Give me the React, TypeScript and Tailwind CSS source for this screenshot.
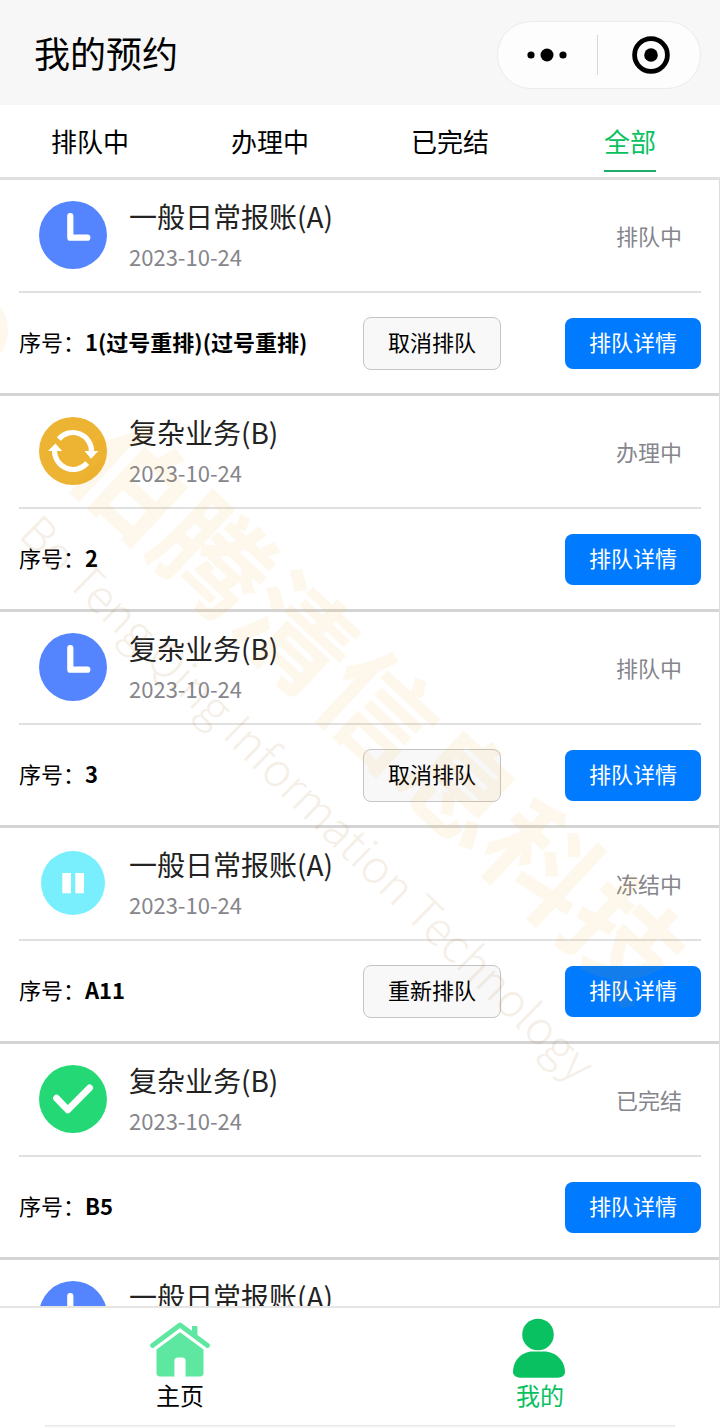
import { useState } from 'react';
import clsx from 'clsx';

type Status = 'waiting' | 'processing' | 'frozen' | 'done';

interface Booking {
  id: number;
  title: string;
  date: string;
  status: Status;
  number: string;
  action?: string;
}

const STATUS_LABELS: Record<Status, string> = {
  waiting: '排队中',
  processing: '办理中',
  frozen: '冻结中',
  done: '已完结',
};

const TABS: { label: string; status?: Status }[] = [
  { label: '排队中', status: 'waiting' },
  { label: '办理中', status: 'processing' },
  { label: '已完结', status: 'done' },
  { label: '全部' },
];

const BOOKINGS: Booking[] = [
  { id: 1, title: '一般日常报账(A)', date: '2023-10-24', status: 'waiting', number: '1(过号重排)(过号重排)', action: '取消排队' },
  { id: 2, title: '复杂业务(B)', date: '2023-10-24', status: 'processing', number: '2' },
  { id: 3, title: '复杂业务(B)', date: '2023-10-24', status: 'waiting', number: '3', action: '取消排队' },
  { id: 4, title: '一般日常报账(A)', date: '2023-10-24', status: 'frozen', number: 'A11', action: '重新排队' },
  { id: 5, title: '复杂业务(B)', date: '2023-10-24', status: 'done', number: 'B5' },
  { id: 6, title: '一般日常报账(A)', date: '2023-10-24', status: 'waiting', number: 'A6', action: '取消排队' },
];

const StatusIcon = ({ status }: { status: Status }) => (
  <svg viewBox="0 0 68 68" className="size-[68px] shrink-0" fill="none" aria-hidden="true">
    {status === 'waiting' && (
      <>
        <circle cx="34" cy="34" r="34" fill="#5485fe" />
        <path d="M31.3 15v21.7h17" stroke="#fff" strokeWidth="6.2" strokeLinecap="round" strokeLinejoin="round" />
      </>
    )}
    {status === 'processing' && (
      <>
        <circle cx="34" cy="34" r="34" fill="#edb332" />
        <path d="M19.8 22A18.6 18.6 0 0 1 52.5 35M15.5 33A18.6 18.6 0 0 0 48.2 46" stroke="#fff" strokeWidth="5.2" />
        <path d="M45.5 34h14L52 41.8zM9 34h14.2L16.4 26.4z" fill="#fff" />
      </>
    )}
    {status === 'frozen' && (
      <>
        <circle cx="34" cy="34" r="32" fill="#79effe" />
        <path d="M23.3 24H32v20.3h-8.7zM36.3 24H45v20.3h-8.7z" fill="#fff" />
      </>
    )}
    {status === 'done' && (
      <>
        <circle cx="34" cy="34" r="34" fill="#24d975" />
        <path d="M17.5 33.2l11.3 11.6 21.8-22" stroke="#fff" strokeWidth="6.8" strokeLinecap="round" strokeLinejoin="round" />
      </>
    )}
  </svg>
);

const HomeIcon = () => (
  <svg viewBox="0 0 62 56" className="h-14 w-[62px]" fill="none" aria-hidden="true">
    <path d="M3.5 24.5L31 4l27.5 20.5" stroke="#5ee7a0" strokeWidth="4.8" strokeLinecap="round" strokeLinejoin="round" />
    <path d="M43 5h5.4v13L43 14z" fill="#5ee7a0" />
    <path
      d="M31 11.2L54.5 28.6V52a3.4 3.4 0 0 1-3.4 3.4H36.6V40a3.4 3.4 0 0 0-3.4-3.4h-4.4a3.4 3.4 0 0 0-3.4 3.4v15.4H10.9A3.4 3.4 0 0 1 7.5 52V28.6z"
      fill="#5ee7a0"
    />
  </svg>
);

const UserIcon = () => (
  <svg viewBox="0 0 56 62" className="h-[62px] w-14" fill="#0ac161" aria-hidden="true">
    <circle cx="26" cy="17.5" r="15.8" />
    <path d="M21 34.5h11c12 0 21 9.5 21 20.5 0 4-4 5.8-9 5.8H10c-5 0-9-1.8-9-5.8C1 44 9 34.5 21 34.5z" />
  </svg>
);

const Watermark = () => (
  <svg className="pointer-events-none absolute inset-0 size-full" aria-hidden="true">
    <circle cx="-32" cy="150" r="40" fill="#f5a623" opacity="0.09" />
    <g textAnchor="middle" dominantBaseline="central">
      <text transform="translate(383 525) rotate(43)" fontSize="112" fontWeight="700" fill="#f5a623" opacity="0.08">
        伯腾清信息科技
      </text>
      <text transform="translate(310 616) rotate(44.5)" fontSize="46" fontWeight="300" fill="#b08040" opacity="0.12">
        Bo Teng Qing Information Technology
      </text>
    </g>
  </svg>
);

const BookingCard = ({ booking }: { booking: Booking }) => (
  <li className="border-b-[3px] border-[#d4d4d4] pr-[18px] pl-[19px]">
    <div className="flex h-[113px] items-center border-b-2 border-[#e0e0e0] pr-[19px] pb-px pl-5">
      <StatusIcon status={booking.status} />
      <div className="ml-[22px] flex-1 pt-0.5">
        <h2 className="text-[28px] leading-10 text-[#222]">{booking.title}</h2>
        <p className="text-[22px] leading-10 text-[#85858c]">{booking.date}</p>
      </div>
      <span className="text-[22px] text-[#85858c]">{STATUS_LABELS[booking.status]}</span>
    </div>
    <div className="flex h-[100px] items-center text-[22px]">
      <p className="flex-1 pb-[3px]">
        序号：<b className="font-bold">{booking.number}</b>
      </p>
      {booking.action && (
        <button className="mr-16 h-[53px] w-[138px] rounded-lg border border-[#c4c4c4] bg-[#f8f8f8] pb-[3px]">
          {booking.action}
        </button>
      )}
      <button className="h-[51px] w-[136px] rounded-lg bg-[#007aff] pb-[3px] text-white">排队详情</button>
    </div>
  </li>
);

export default function App() {
  const [tab, setTab] = useState(3);
  const filter = TABS[tab].status;
  const bookings = BOOKINGS.filter((b) => !filter || b.status === filter);

  return (
    <div className="flex h-screen flex-col bg-white font-['Noto_Sans_CJK_SC',sans-serif] text-black">
      {/* Header */}
      <header className="flex h-[105px] shrink-0 items-center justify-between bg-[#f7f7f7] pt-1 pr-[19px] pl-[34px]">
        <h1 className="pb-1.5 text-[36px] leading-none">我的预约</h1>
        <div className="flex h-[68px] w-[204px] items-center rounded-full border border-[#ebebeb] bg-[#fdfdfd]">
          <button aria-label="更多" className="flex h-full flex-1 items-center justify-center">
            <svg viewBox="0 0 40 14" className="h-3.5 w-10" aria-hidden="true">
              <circle cx="4" cy="7" r="3.6" />
              <circle cx="20" cy="7" r="6.5" />
              <circle cx="36" cy="7" r="3.6" />
            </svg>
          </button>
          <span className="h-10 w-px bg-[#d8d8d8]" />
          <button aria-label="关闭" className="flex h-full flex-1 items-center justify-center pl-1">
            <svg viewBox="0 0 38 38" className="size-[38px]" aria-hidden="true">
              <circle cx="19" cy="19" r="16.4" fill="none" stroke="#000" strokeWidth="4.8" />
              <circle cx="19" cy="19" r="6.8" />
            </svg>
          </button>
        </div>
      </header>

      {/* Tabs */}
      <nav className="grid shrink-0 grid-cols-4 border-b-[3px] border-[#e0e0e0] pt-2 pb-[5px]">
        {TABS.map((t, i) => (
          <button key={t.label} onClick={() => setTab(i)} className="flex justify-center">
            <span
              className={clsx(
                'border-b-2 pb-px text-[26px] leading-[56px]',
                i === tab ? 'border-[#1aad6b] text-[#07c160]' : 'border-transparent',
              )}
            >
              {t.label}
            </span>
          </button>
        ))}
      </nav>

      {/* List */}
      <main className="relative min-h-0 flex-1 overflow-hidden">
        <ul className="h-full overflow-y-auto border-r border-[#dcdcdc] [scrollbar-width:none]">
          {bookings.map((b) => (
            <BookingCard key={b.id} booking={b} />
          ))}
        </ul>
        <Watermark />
      </main>

      {/* Bottom bar */}
      <footer className="shrink-0 border-t-2 border-[#e4e4e4]">
        <div className="grid grid-cols-2 pt-[9px] pb-[15px] text-[24px] leading-[31px]">
          <a href="#home" className="flex flex-col items-center">
            <span className="flex h-[62px] items-end pb-0.5">
              <HomeIcon />
            </span>
            主页
          </a>
          <a href="#mine" className="flex flex-col items-center text-[#07c160]">
            <UserIcon />
            我的
          </a>
        </div>
        <div className="mx-[45px] h-[3px] border-t border-[#e6e6e6] bg-[#f7f7f7]" />
      </footer>
    </div>
  );
}
